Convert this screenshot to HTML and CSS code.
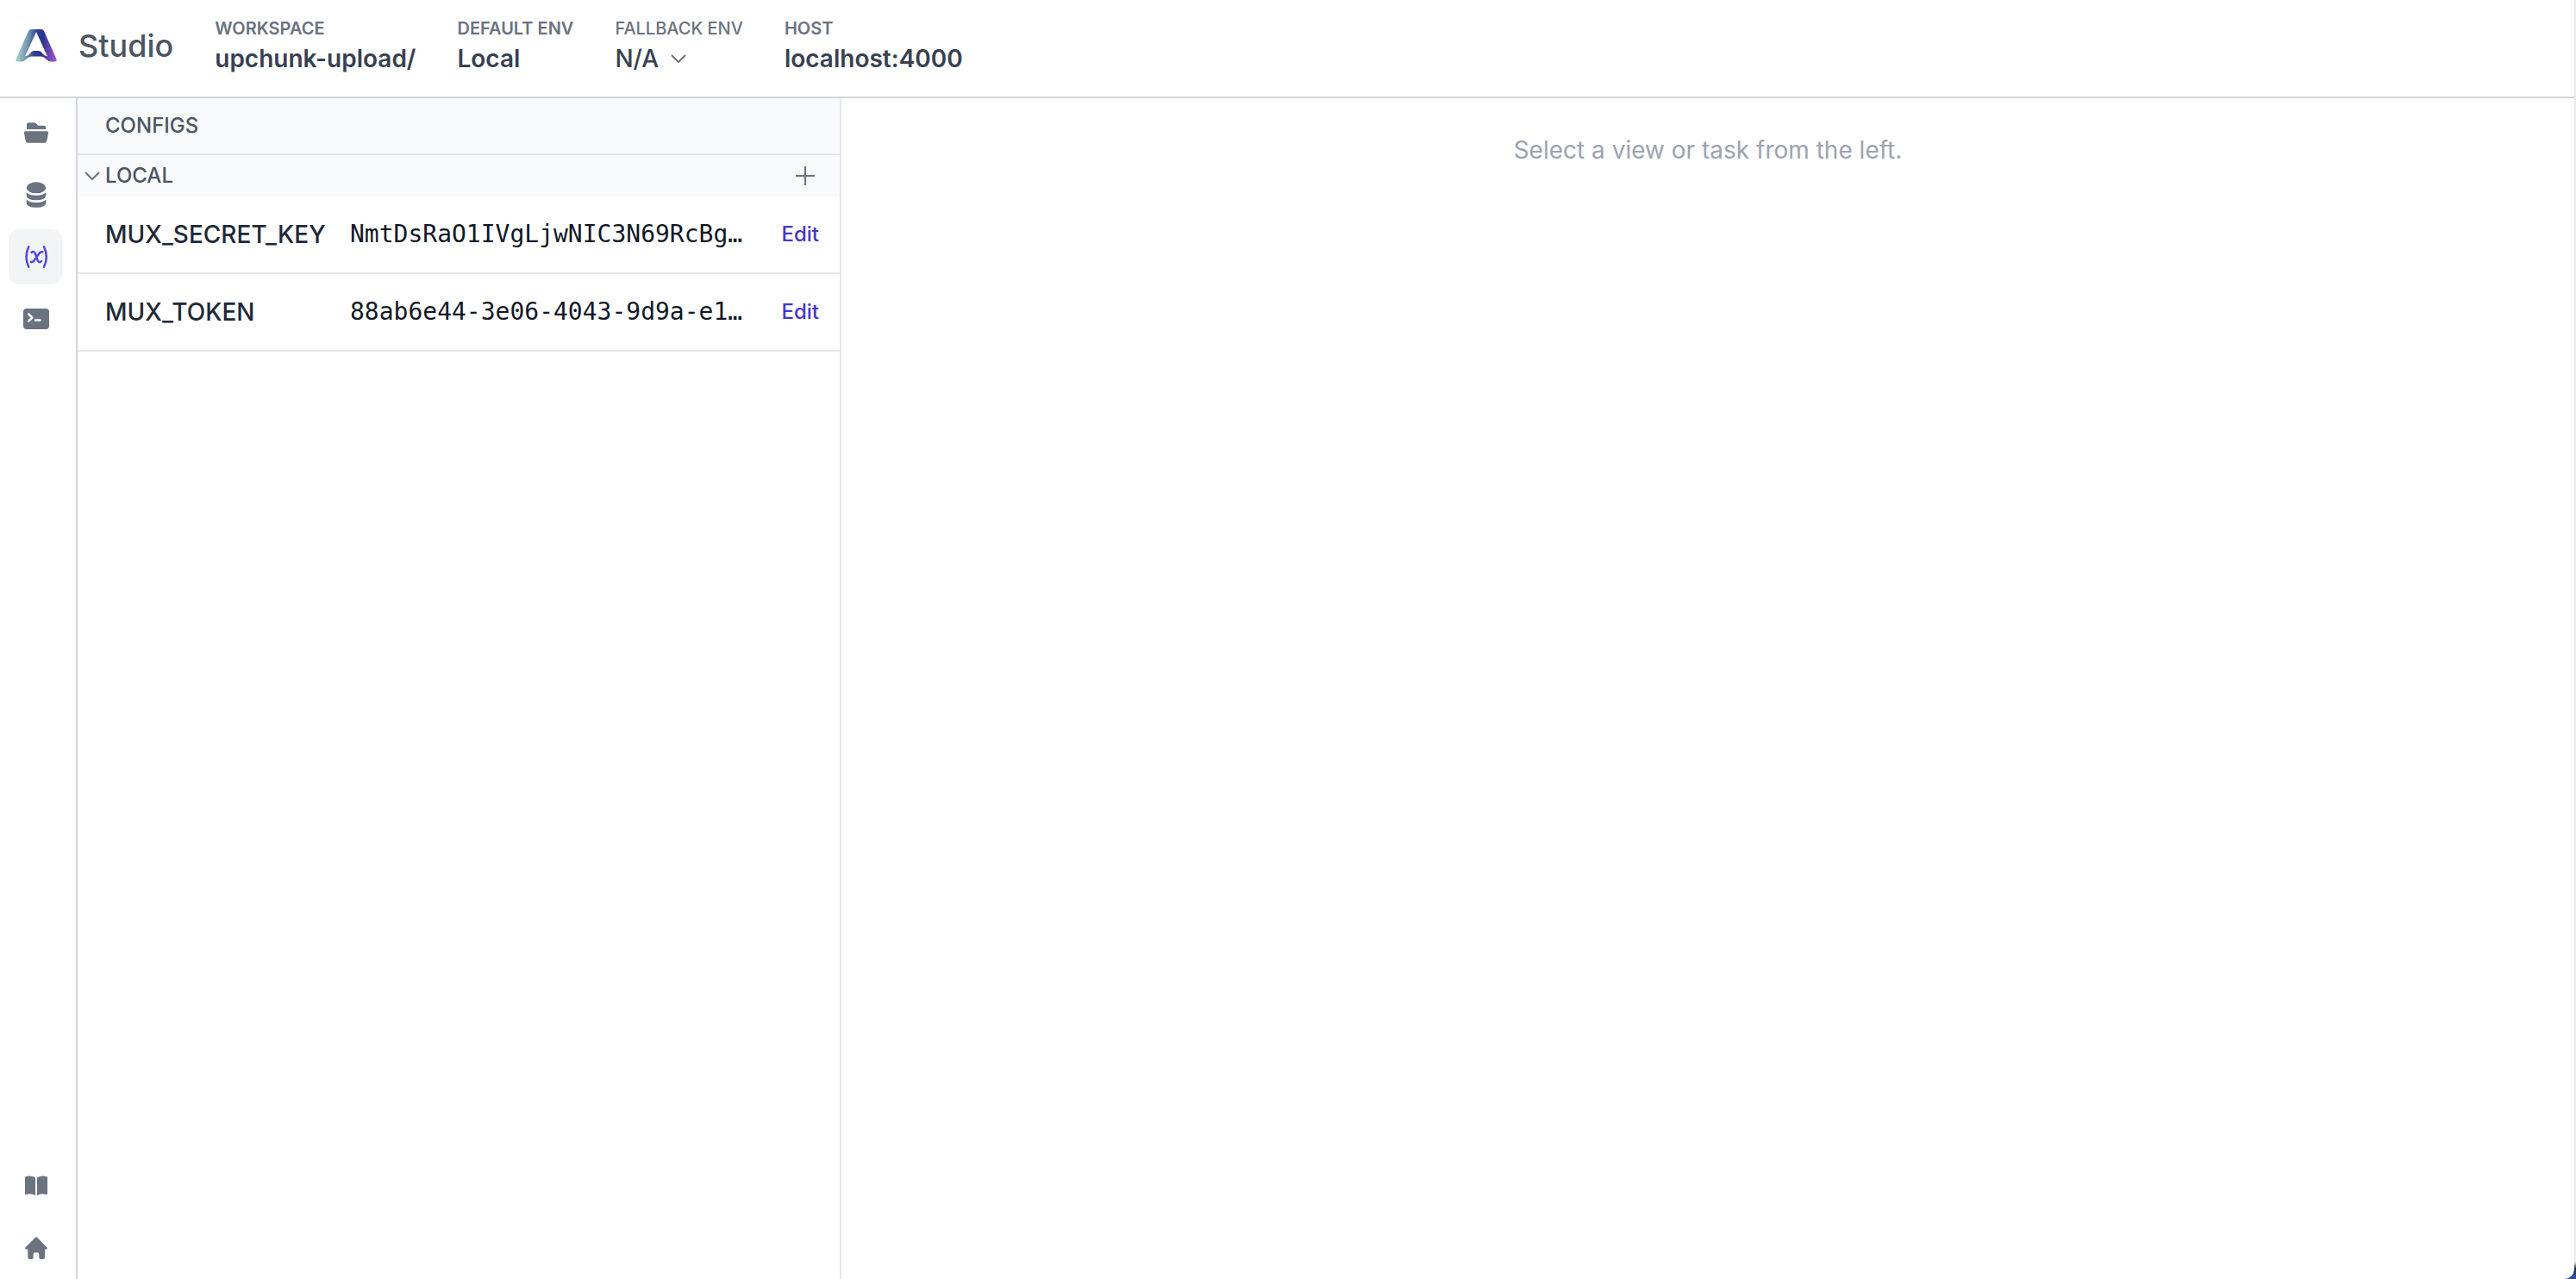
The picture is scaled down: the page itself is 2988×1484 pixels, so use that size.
FILE: index.html
```html
<!DOCTYPE html>
<html lang="en">
<head>
    <meta charset="UTF-8">
    <meta name="viewport" content="width=device-width, initial-scale=1.0">
    <title>Studio</title>
    <link rel="stylesheet" href="styles.css">
</head>
<body>

    <div class="app">
        <header class="header">
            <a class="brand" href="#">
                <svg class="logo" viewBox="0 0 48 38" aria-hidden="true">
                    <defs>
                        <linearGradient id="logoFill" x1="0" y1="0.9" x2="1" y2="1">
                            <stop offset="0" stop-color="#b0d8d0"/>
                            <stop offset="0.25" stop-color="#6f92ae"/>
                            <stop offset="0.42" stop-color="#2f4191"/>
                            <stop offset="0.6" stop-color="#2c3191"/>
                            <stop offset="0.8" stop-color="#6f47b4"/>
                            <stop offset="1" stop-color="#a55bd8"/>
                        </linearGradient>
                    </defs>
                    <path fill="url(#logoFill)" fill-rule="evenodd" d="M18 0h12q2 0 3 2l14.500 32.500q1 3-2 3h-5q-2 0-4-2-3-3.500-6.500-4H18q-3.500.5-6.500 4-2 2-4 2h-5q-3 0-2-3L15 2q1-2 3-2zM24 3L11 31.500q4-.8 6-3.800 1.500-2.700 4-2.700h6q2.500 0 4 2.700 2 3 6 3.800z"/>
                </svg>
                <span>Studio</span>
            </a>

            <div class="info">
                <span class="info-label">WORKSPACE</span>
                <span class="info-value">upchunk-upload/</span>
            </div>
            <div class="info">
                <span class="info-label">DEFAULT ENV</span>
                <span class="info-value">Local</span>
            </div>
            <div class="info info-light">
                <label class="info-label" for="fallback">FALLBACK ENV</label>
                <div class="select">
                    <select class="info-value" id="fallback">
                        <option>N/A</option>
                    </select>
                    <svg class="chevron" viewBox="0 0 18 10" aria-hidden="true"><path d="M1 1l8 8 8-8"/></svg>
                </div>
            </div>
            <div class="info">
                <span class="info-label">HOST</span>
                <span class="info-value">localhost:4000</span>
            </div>
        </header>

        <div class="body">
            <nav class="rail">
                <a class="rail-item" href="#" aria-label="Files">
                    <svg class="icon" viewBox="0 0 32 32">
                        <path d="M6 12V7q0-2.700 2.700-2.700h6q1 0 1.800.7l2.200 2.200q.6.500 1.500.500h5.600q2.500 0 2.500 2.500V12z"/>
                        <path d="M5 14.300h24q2.300 0 2 2.300l-1.600 8.600q-.5 2.500-3 2.500H7.600q-2.500 0-3-2.500L3 16.600q-.3-2.300 2-2.300z"/>
                    </svg>
                </a>
                <a class="rail-item" href="#" aria-label="Database">
                    <svg class="icon" viewBox="0 0 32 32">
                        <ellipse cx="17" cy="7.800" rx="11.300" ry="6.500"/>
                        <path d="M5.700 13.200q3.500 3.500 11.300 3.500t11.300-3.500v3.300q0 5.800-11.300 5.800T5.700 16.500z"/>
                        <path d="M5.700 21.500q3.500 3.500 11.300 3.500t11.300-3.500v3.400q0 5.800-11.300 5.800T5.700 24.900z"/>
                    </svg>
                </a>
                <a class="rail-item active" href="#" aria-label="Configs" aria-current="page">
                    <svg class="icon icon-line" viewBox="0 0 32 32">
                        <path d="M8.300 4.300Q5.500 10 5.500 16t2.800 11.700M26 4.300Q28.800 10 28.800 16T26 27.700"/>
                        <path d="M11.500 11q1.300-1.200 2.600-.9 1.200.3 1.700 1.900l3 8.300q.5 1.500 1.700 1.800 1.200.3 2.500-.9M24.300 10.300q-2-.6-3.400 1.300l-6.500 9q-1.500 1.900-3.600 1.400"/>
                    </svg>
                </a>
                <a class="rail-item" href="#" aria-label="Terminal">
                    <svg class="icon" viewBox="0 0 32 32">
                        <rect x="2" y="4" width="30" height="24" rx="4"/>
                        <path class="cut" d="M8.300 10.500l4 4-4 4M16 17.500h5.500"/>
                    </svg>
                </a>
                <div class="rail-bottom">
                    <a class="rail-item" href="#" aria-label="Docs">
                        <svg class="icon" viewBox="0 0 32 32">
                            <path d="M4 5.600q6-2.600 12 .600V27q-3-1.800-6-1.800-2.500 0-5 .7-1 .2-1-1z"/>
                            <path d="M30 5.600q-6-2.600-12 .600V27q3-1.800 6-1.800 2.500 0 5 .7 1 .2 1-1z"/>
                        </svg>
                    </a>
                    <a class="rail-item" href="#" aria-label="Home">
                        <svg class="icon" viewBox="0 0 32 32">
                            <path d="M16 3.800q1-1 2 0l11.600 11.600q1 1.600-.8 2H27v9.600q0 2-2 2h-2.700q-2 0-2-2v-3.700q0-2-2-2h-2.600q-2 0-2 2V27q0 2-2 2H9.300q-2 0-2-2v-9.600H5.200q-1.800-.4-.8-2z"/>
                        </svg>
                    </a>
                </div>
            </nav>

            <aside class="sidebar">
                <h1 class="sidebar-title">CONFIGS</h1>

                <div class="group">
                    <button class="group-toggle" type="button" aria-expanded="true">
                        <svg class="chevron" viewBox="0 0 18 10" aria-hidden="true"><path d="M1 1l8 8 8-8"/></svg>
                        LOCAL
                    </button>
                    <button class="add" type="button" aria-label="Add config">
                        <svg viewBox="0 0 24 24" aria-hidden="true"><path d="M12 1v22M1 12h22"/></svg>
                    </button>
                </div>

                <table class="configs">
                    <tr>
                        <th scope="row">MUX_SECRET_KEY</th>
                        <td class="value">NmtDsRaO1IVgLjwNIC3N69RcBg…</td>
                        <td class="action"><button class="edit" type="button">Edit</button></td>
                    </tr>
                    <tr>
                        <th scope="row">MUX_TOKEN</th>
                        <td class="value">88ab6e44-3e06-4043-9d9a-e1…</td>
                        <td class="action"><button class="edit" type="button">Edit</button></td>
                    </tr>
                </table>
            </aside>

            <main class="main">
                <p>Select a view or task from the left.</p>
            </main>
        </div>
    </div>

</body>
</html>
```
FILE: styles.css
```css
* {
    box-sizing: border-box;
}
body {
    margin: 0;
    font-family: Inter, sans-serif;
    font-size: 28px;
    line-height: 40px;
    color: #1f2937;
    background: linear-gradient(to top, #2f4f9e 4px, #1b2440 12px, #ebe9f1 20px);
}
a {
    color: inherit;
    text-decoration: none;
}
button, select {
    font: inherit;
    color: inherit;
    background: none;
    border: none;
    padding: 0;
    cursor: pointer;
}
svg {
    display: block;
    flex: none;
}
.app {
    display: flex;
    flex-direction: column;
    min-height: 100vh;
    margin-right: 2px;
    background-color: white;
    border-bottom-right-radius: 12px;
}

/* Header */
.header {
    display: flex;
    gap: 48px;
    height: 114px;
    padding: 18px;
    border-bottom: 2px solid #d1d5db;
}
.brand {
    display: flex;
    align-items: center;
    gap: 25px;
    height: 70px;
    font-size: 36px;
    font-weight: 500;
    color: #4b5563;
}
.logo {
    width: 48px;
    height: 38px;
}
.info {
    display: flex;
    flex-direction: column;
    font-weight: 600;
}
.info-light {
    font-weight: 500;
}
.info-label {
    font-size: 20px;
    line-height: 30px;
    color: #6b7280;
}
.info-value {
    line-height: 40px;
    color: #374151;
}
.select {
    display: grid;
    justify-content: start;
    align-items: center;
}
.select select {
    grid-area: 1 / 1;
    appearance: none;
    padding-right: 32px;
}
.select .chevron {
    grid-area: 1 / 1;
    justify-self: end;
    pointer-events: none;
}
.chevron {
    width: 18px;
    height: 10px;
    fill: none;
    stroke: #6b7280;
    stroke-width: 2;
}

/* Left icon rail */
.body {
    display: flex;
    flex: 1;
}
.rail {
    display: flex;
    flex-direction: column;
    gap: 8px;
    width: 90px;
    padding: 8px 16px 4px 10px;
    border-right: 2px solid #d1d5db;
}
.rail-item {
    display: flex;
    align-items: center;
    justify-content: center;
    height: 64px;
    border-radius: 12px;
    color: #6b7280;
}
.rail-item.active {
    background-color: #f3f4f6;
    color: #4f46e5;
}
.rail-bottom {
    display: flex;
    flex-direction: column;
    gap: 8px;
    margin-top: auto;
}
.icon {
    width: 32px;
    height: 32px;
    fill: currentColor;
}
.icon-line {
    fill: none;
    stroke: currentColor;
    stroke-width: 2.5;
    stroke-linecap: round;
}
.cut {
    fill: none;
    stroke: white;
    stroke-width: 2.5;
    stroke-linecap: round;
    stroke-linejoin: round;
}

/* Config list */
.sidebar {
    width: 886px;
    max-width: 40%;
    border-right: 2px solid #e5e7eb;
}
.sidebar-title {
    margin: 0;
    padding: 12px 32px;
    font-size: 24px;
    font-weight: 500;
    color: #4b5563;
    background-color: #f9fafb;
    border-bottom: 2px solid #e5e7eb;
}
.group {
    display: flex;
    align-items: center;
    justify-content: space-between;
    height: 48px;
    padding: 0 28px 0 8px;
    background-color: #f9fafb;
}
.group-toggle {
    display: flex;
    align-items: center;
    gap: 6px;
    font-size: 24px;
    font-weight: 500;
    color: #4b5563;
}
.add svg {
    width: 24px;
    height: 24px;
    fill: none;
    stroke: #6b7280;
    stroke-width: 2;
}
.configs {
    width: 100%;
    table-layout: fixed;
    border-spacing: 0;
}
.configs th, .configs td {
    height: 90px;
    padding: 0;
    border-bottom: 2px solid #e5e7eb;
}
.configs th {
    width: 316px;
    padding-left: 32px;
    font-weight: 500;
    text-align: left;
}
.configs .value {
    font-family: "DejaVu Sans Mono", monospace;
    color: #111827;
    white-space: nowrap;
    overflow: hidden;
    text-overflow: ellipsis;
}
.configs .action {
    width: 96px;
    padding-right: 24px;
    text-align: right;
}
.edit {
    display: block;
    margin-left: auto;
    font-size: 24px;
    font-weight: 500;
    color: #4338ca;
}

/* Main area */
.main {
    flex: 1;
    padding: 40px;
    text-align: center;
    color: #9ca3af;
}
.main p {
    margin: 0;
}
```
